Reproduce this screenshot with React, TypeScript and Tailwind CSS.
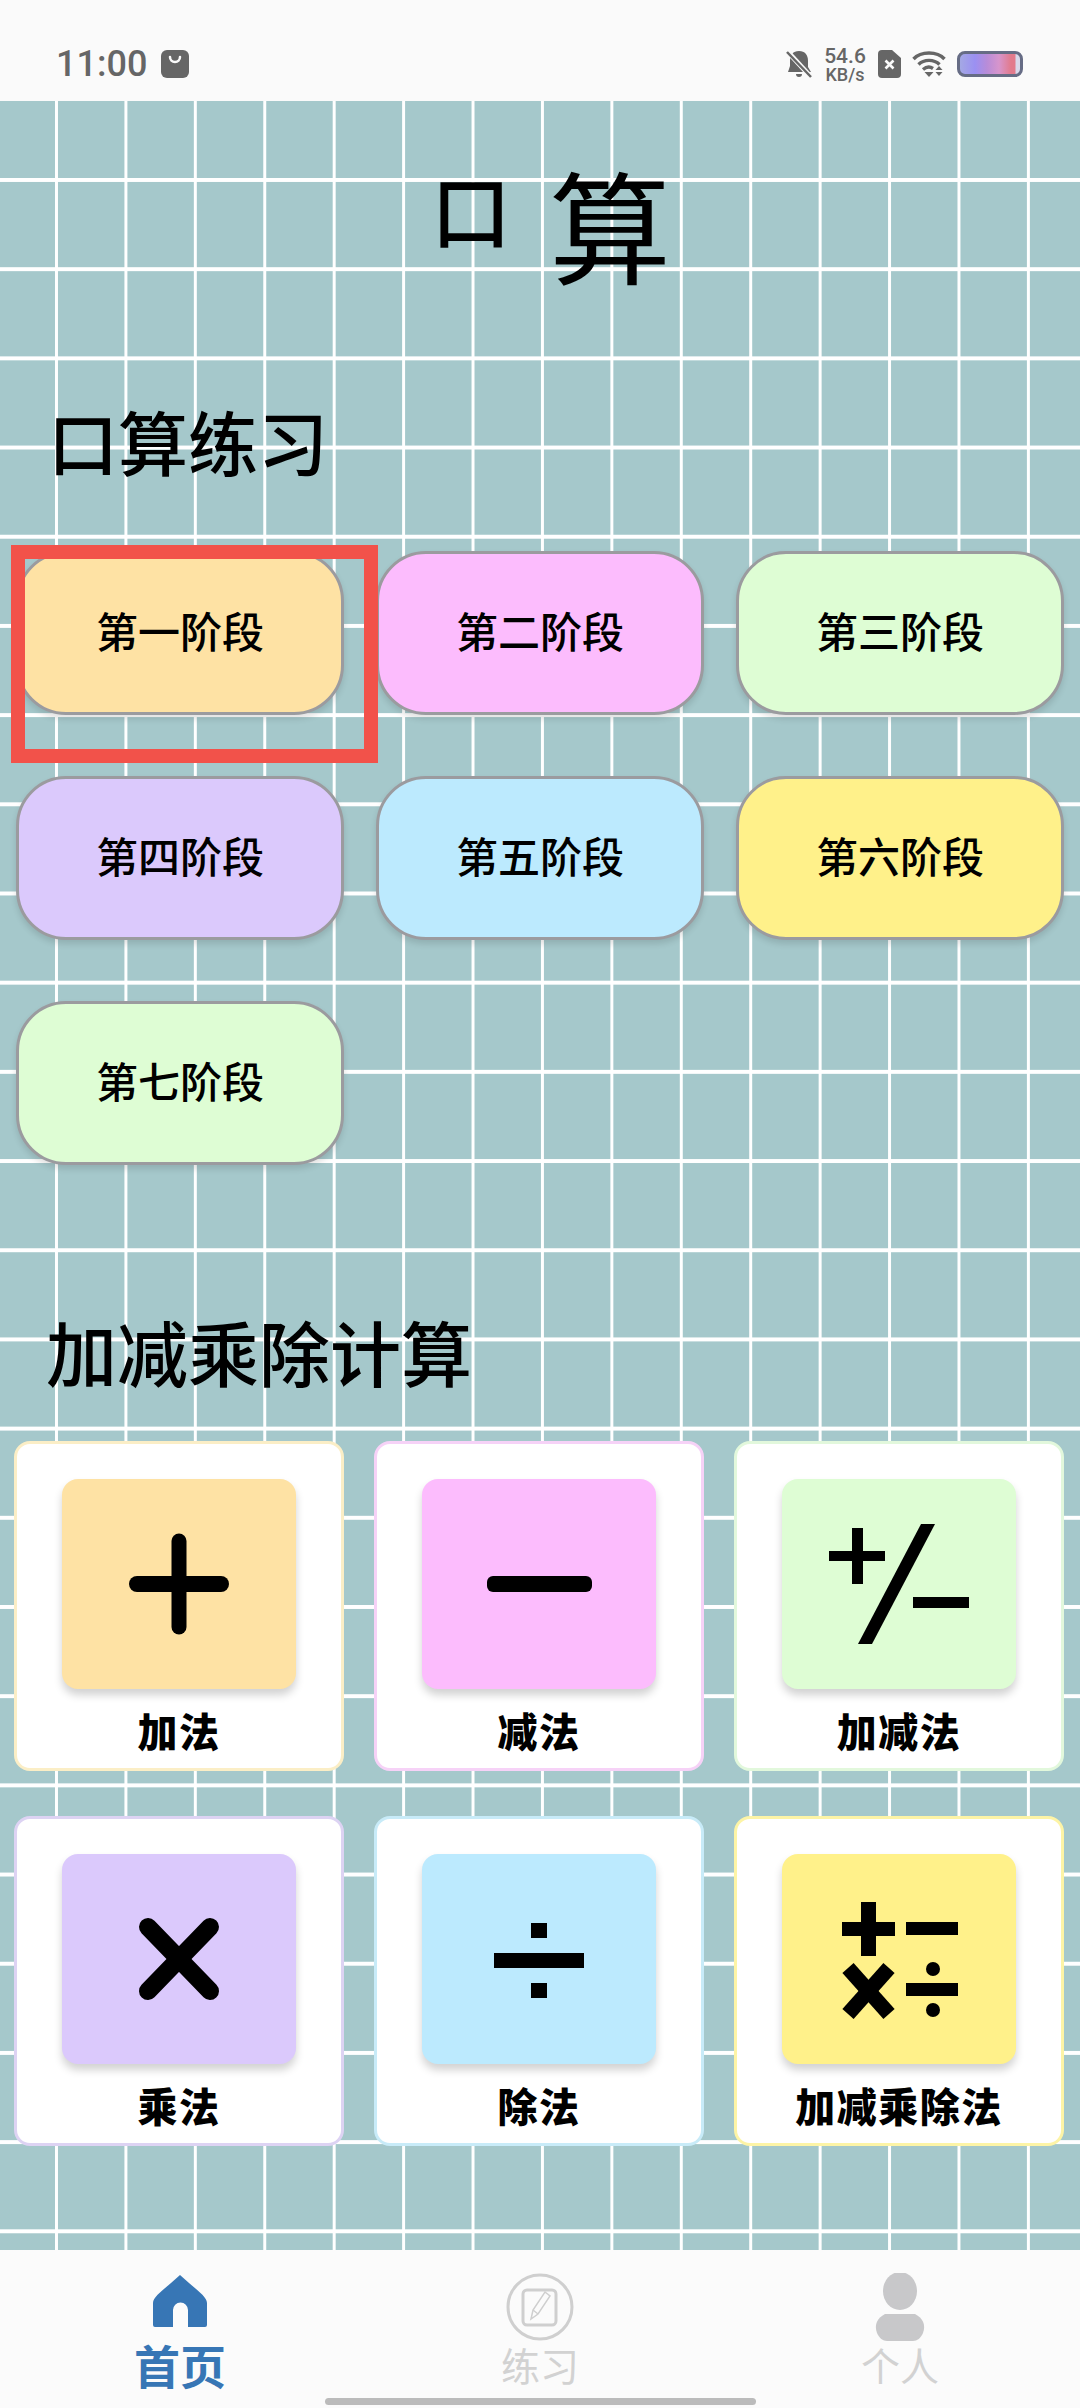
import React from 'react';

const CJK = 'font-["Noto_Sans_CJK_SC","Noto_Sans",sans-serif]';

const stages = [
  { name: '第一阶段', className: 'bg-[#fee2a4]' },
  { name: '第二阶段', className: 'bg-[#fcbcfd]' },
  { name: '第三阶段', className: 'bg-[#defdd4]' },
  { name: '第四阶段', className: 'bg-[#dbc9fc]' },
  { name: '第五阶段', className: 'bg-[#bceafe]' },
  { name: '第六阶段', className: 'bg-[#fff18a]' },
  { name: '第七阶段', className: 'bg-[#defdd4]' },
];

const PlusIcon = () => (
  <g stroke="#000" fill="none" strokeLinecap="round">
    <line x1="75" y1="105" x2="159" y2="105" strokeWidth="16" />
    <line x1="117" y1="62" x2="117" y2="148" strokeWidth="15" />
  </g>
);

const MinusIcon = () => <rect x="65" y="97" width="105" height="16" rx="6" fill="#000" />;

const PlusMinusIcon = () => (
  <g fill="#000">
    <rect x="47" y="72" width="56" height="10" />
    <rect x="70" y="49" width="11" height="56" />
    <polygon points="139,45 153,45 90,165 76,165" />
    <rect x="131" y="118" width="56" height="11" />
  </g>
);

const TimesIcon = () => (
  <g stroke="#000" strokeWidth="18" strokeLinecap="round">
    <line x1="86" y1="73" x2="148" y2="137" />
    <line x1="148" y1="73" x2="86" y2="137" />
  </g>
);

const DivideIcon = () => (
  <g fill="#000">
    <rect x="72" y="99" width="90" height="15" />
    <rect x="109" y="69" width="16" height="15" />
    <rect x="109" y="129" width="16" height="15" />
  </g>
);

const AllOpsIcon = () => (
  <g fill="#000">
    <rect x="60" y="68" width="53" height="14" />
    <rect x="79" y="48" width="15" height="54" />
    <rect x="124" y="68" width="52" height="13" />
    <g stroke="#000" strokeWidth="15">
      <line x1="66" y1="114" x2="107" y2="160" />
      <line x1="107" y1="114" x2="66" y2="160" />
    </g>
    <rect x="124" y="129" width="52" height="13" />
    <circle cx="151" cy="115" r="7" />
    <circle cx="151" cy="156" r="7" />
  </g>
);

const operations = [
  { name: '加法', card: 'border-[#fbeec6]', tile: 'bg-[#fee2a4]', icon: <PlusIcon /> },
  { name: '减法', card: 'border-[#f6d2f7]', tile: 'bg-[#fcbcfd]', icon: <MinusIcon /> },
  { name: '加减法', card: 'border-[#e2f8dc]', tile: 'bg-[#defdd4]', icon: <PlusMinusIcon /> },
  { name: '乘法', card: 'border-[#ddd3f3]', tile: 'bg-[#dbc9fc]', icon: <TimesIcon /> },
  { name: '除法', card: 'border-[#c8ebf8]', tile: 'bg-[#bceafe]', icon: <DivideIcon /> },
  { name: '加减乘除法', card: 'border-[#fdf4a6]', tile: 'bg-[#fff18a]', icon: <AllOpsIcon /> },
];

const StatusBar = () => (
  <div className="h-[101px] shrink-0 bg-[#fafafa] flex items-end justify-between pl-[56px] pr-[57px] pb-[23px]">
    <div className="flex items-center gap-[14px] h-[28px]">
      <span className='font-["Roboto",sans-serif] font-medium text-[36px] leading-none text-[#666]'>11:00</span>
      <svg width="28" height="28" viewBox="0 0 28 28">
        <rect width="28" height="28" rx="6" fill="#666" />
        <path d="M9 7 a5 5 0 0 0 10 0" fill="none" stroke="#fafafa" strokeWidth="2.5" strokeLinecap="round" />
      </svg>
    </div>
    <div className="flex items-center h-[28px]">
      <svg width="26" height="28" viewBox="0 0 26 28">
        <path d="M13 1 c6 0 9 4 9 10 v6 l3 5 H2 l2 -6 v-6 C4 5 7 1 13 1z M10 24 h6 a3 3 0 0 1 -6 0z" fill="#666" />
        <line x1="1" y1="1" x2="25" y2="27" stroke="#fafafa" strokeWidth="5" />
        <line x1="1" y1="2" x2="25" y2="27" stroke="#666" strokeWidth="2.5" />
      </svg>
      <div className='ml-[11px] w-[44px] flex flex-col items-center font-["Roboto",sans-serif] font-medium text-[#666]'>
        <span className="text-[21px] leading-[20px]">54.6</span>
        <span className="text-[18px] leading-[17px]">KB/s</span>
      </div>
      <svg className="ml-[11px]" width="23" height="28" viewBox="0 0 23 28">
        <path d="M4 0 h10 l9 8 v16 a4 4 0 0 1 -4 4 H4 a4 4 0 0 1 -4 -4 V4 a4 4 0 0 1 4 -4z" fill="#666" />
        <path d="M7.5 10.5 l8 8 M15.5 10.5 l-8 8" stroke="#fafafa" strokeWidth="2.6" />
      </svg>
      <svg className="ml-[11px]" width="34" height="26" viewBox="0 0 34 26">
        <g fill="none" stroke="#666" strokeWidth="3.4">
          <path d="M1.5 8 C9 0 25 0 32.5 8" />
          <path d="M6.5 13.5 C12 8 22 8 27.5 13.5" />
          <path d="M11 18.5 C14 16 18 15.5 21 17.5" />
        </g>
        <path d="M12.5 21 h9 l-4.5 5z" fill="#666" />
        <path d="M27 15 l3.5 4 h-7z M23.5 21 h7 l-3.5 4z" fill="#666" />
      </svg>
      <div className="ml-[11px] w-[66px] h-[26px] rounded-[8px] border-[3px] border-[#666c85] bg-[linear-gradient(90deg,#a4a8e4_0%,#9b90f2_25%,#b88cd8_45%,#d795cc_65%,#e27a8c_85%,#e27a8c_92%,#d8d8ea_93%)]" />
    </div>
  </div>
);

const BottomNav = () => (
  <div className={`h-[158px] shrink-0 bg-[#fbfbfb] pt-[23px] flex flex-col ${CJK}`}>
    <div className="grid grid-cols-3">
      <div className="flex flex-col items-center">
        <svg width="70" height="68" viewBox="0 0 70 68">
          <path
            fillRule="evenodd"
            d="M35 2 L44 10 C52 17 62 24 62 30 V52 a2 2 0 0 1 -2 2 H43 V37 a7.5 7.5 0 0 0 -15 0 V54 H10 a2 2 0 0 1 -2 -2 V30 C8 24 18 17 26 10z"
            fill="#3776b5"
          />
        </svg>
        <span className="text-[46px] leading-[46px] font-bold text-[#3776b5]">首页</span>
      </div>
      <div className="flex flex-col items-center">
        <svg width="70" height="68" viewBox="0 0 70 68">
          <circle cx="35" cy="34" r="32" fill="none" stroke="#cfcfcf" strokeWidth="3" />
          <rect x="18" y="17" width="33" height="35" rx="4" fill="none" stroke="#cfcfcf" strokeWidth="3" />
          <path d="M26 46 L28 37 L40 19 L45 23 L33 41z" fill="#fbfbfb" stroke="#cfcfcf" strokeWidth="1.5" />
          <path d="M28 37 L33 41" stroke="#cfcfcf" strokeWidth="1.5" />
        </svg>
        <span className="text-[39px] leading-[46px] text-[#d2d2d2]">练习</span>
      </div>
      <div className="flex flex-col items-center">
        <svg width="70" height="68" viewBox="0 0 70 68">
          <ellipse cx="35" cy="18" rx="17" ry="19" fill="#c8c8ca" />
          <path d="M20 41 H50 C58 45 61 52 58 60 C56 65 52 68 48 68 H22 C18 68 14 65 12 60 C9 52 12 45 20 41z" fill="#c8c8ca" />
        </svg>
        <span className="text-[39px] leading-[46px] text-[#d2d2d2]">个人</span>
      </div>
    </div>
    <div className="mt-[11px] mx-auto w-[431px] h-[7px] rounded-full bg-[#bbbbbb]" />
  </div>
);

export default function App() {
  return (
    <div className={`w-[1080px] h-[2408px] flex flex-col overflow-hidden text-black ${CJK}`}>
      <StatusBar />

      {/* grid paper behind the page */}
      <div className="flex-1 bg-[#a5c8cb] bg-[linear-gradient(#fff_0_4px,transparent_4px),linear-gradient(90deg,#fff_0_2.5px,transparent_2.5px)] bg-[size:69.43px_89.2px] bg-[position:55px_77px]">
        <div className="h-[190px] pl-[22px] flex items-end justify-center gap-[38px] leading-none">
          <span className="text-[80px] mb-[44px] font-medium">口</span>
          <span className="text-[122px] mb-[8px] font-normal">算</span>
        </div>

        <h2 className="mt-[105px] ml-[48px] text-[70px] leading-[90px] font-medium">口算练习</h2>

        <div className="relative mt-[65px] pl-[16px] grid grid-cols-[repeat(3,328px)] gap-x-[32px] gap-y-[61px]">
          {stages.map((stage) => (
            <button
              key={stage.name}
              className={`h-[164px] pb-[8px] rounded-[50px] border-[3px] border-[#9b9b9f] shadow-[0_4px_6px_rgba(0,0,0,0.12)] flex items-center justify-center text-[42px] font-medium ${stage.className}`}
            >
              {stage.name}
            </button>
          ))}
          <div className="absolute left-[11px] top-[-6px] w-[367px] h-[218px] border-[14px] border-[#f2524a]" />
        </div>

        <h2 className="mt-[139px] ml-[46px] text-[71px] leading-[92px] font-medium">加减乘除计算</h2>

        <div className="mt-[45px] pl-[14px] grid grid-cols-[repeat(3,330px)] gap-x-[30px] gap-y-[45px]">
          {operations.map((op) => (
            <div key={op.name} className={`h-[330px] rounded-[16px] border-[3px] bg-white flex flex-col items-center pt-[35px] ${op.card}`}>
              <div className={`w-[234px] h-[210px] shrink-0 rounded-[16px] shadow-[0_6px_8px_rgba(0,0,0,0.18)] ${op.tile}`}>
                <svg width="234" height="210" viewBox="0 0 234 210">
                  {op.icon}
                </svg>
              </div>
              <span className="mt-[16px] text-[40px] leading-[50px] font-black tracking-[1.5px]">{op.name}</span>
            </div>
          ))}
        </div>
      </div>

      <BottomNav />
    </div>
  );
}
